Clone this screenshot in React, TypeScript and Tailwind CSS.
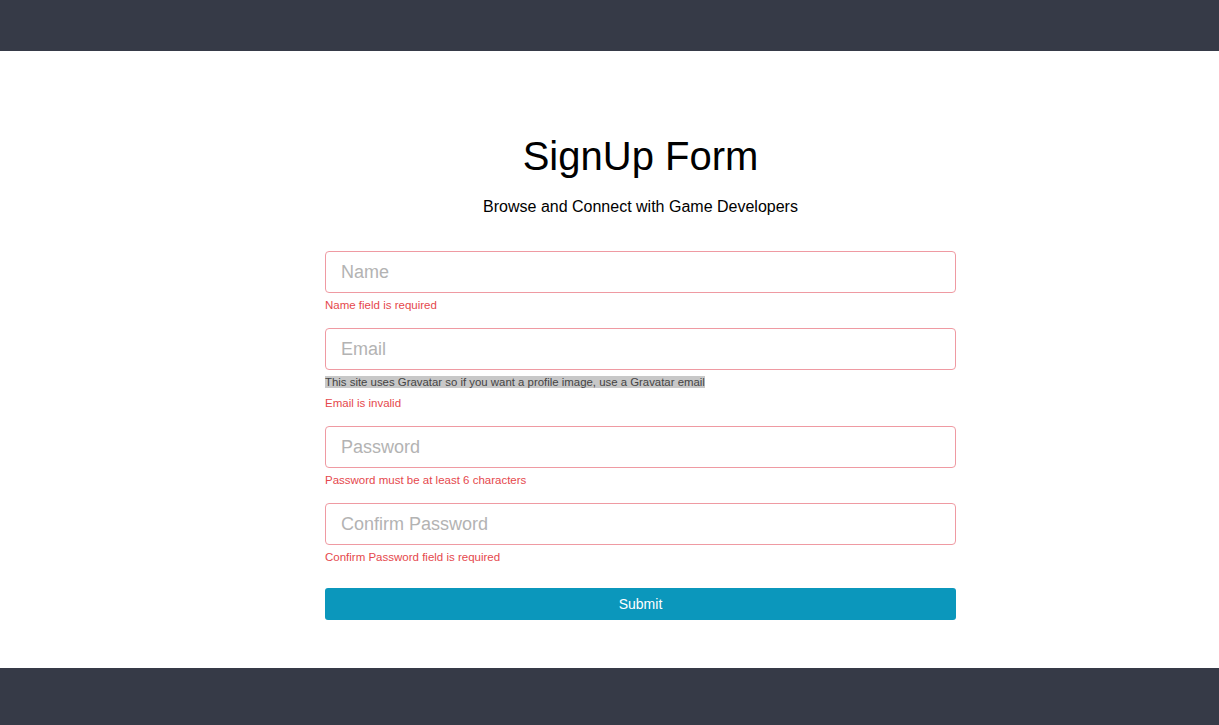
import React from "react";

const fields = [
  { placeholder: "Name", type: "text", error: "Name field is required" },
  {
    placeholder: "Email",
    type: "email",
    note: "This site uses Gravatar so if you want a profile image, use a Gravatar email",
    error: "Email is invalid",
  },
  { placeholder: "Password", type: "password", error: "Password must be at least 6 characters" },
  { placeholder: "Confirm Password", type: "password", error: "Confirm Password field is required" },
];

export default function App() {
  return (
    <div
      className="flex h-[725px] flex-col overflow-hidden bg-white"
      style={{ fontFamily: '"Liberation Sans", Arial, sans-serif' }}
    >
      <header className="h-[51px] shrink-0 bg-[#363a47]" />

      <main className="h-[617px] shrink-0 pt-[83px]">
        <div className="ml-[325px] w-[631px]">
          <h1 className="text-center text-[40px] leading-[44px] text-black">SignUp Form</h1>
          <p className="mt-[19px] text-center text-[16px] leading-[20px] text-black">
            Browse and Connect with Game Developers
          </p>

          <form className="mt-[34px] flex flex-col gap-4" onSubmit={(e) => e.preventDefault()}>
            {fields.map((f) => (
              <div key={f.placeholder}>
                <input
                  type={f.type}
                  placeholder={f.placeholder}
                  className="block h-[42px] w-full rounded-[4px] border border-[#ef9aa2] bg-white px-[15px] text-[18px] text-[#333] outline-none placeholder:text-[#b3b3b3]"
                />
                {f.note && (
                  <div className="mt-[5px] text-[11.4px] leading-[14px] text-[#444]">
                    <span className="bg-[#c8c8c8]">{f.note}</span>
                  </div>
                )}
                <div
                  className={
                    f.note
                      ? "mt-[7px] text-[11.5px] leading-[14px] text-[#e5484d]"
                      : "mt-[5px] text-[11.5px] leading-[14px] text-[#e5484d]"
                  }
                >
                  {f.error}
                </div>
              </div>
            ))}

            <button
              type="submit"
              className="mt-2 block h-[32px] w-full rounded-[3px] bg-[#0b97bc] text-[14px] text-white"
            >
              Submit
            </button>
          </form>
        </div>
      </main>

      <footer className="flex-1 bg-[#363a47]" />
    </div>
  );
}
